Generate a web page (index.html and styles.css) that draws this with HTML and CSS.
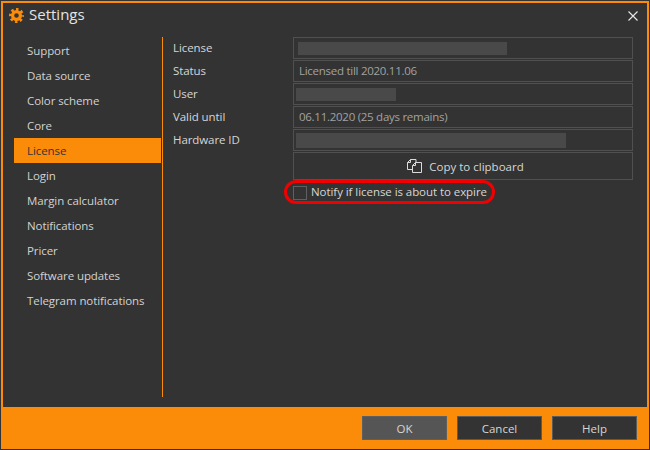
FILE: index.html
```html
<!DOCTYPE html>
<html lang="en">
<head>
<meta charset="utf-8">
<title>Settings</title>
<link rel="stylesheet" href="styles.css">
</head>
<body>
<div class="window">
  <header class="titlebar">
    <svg class="gear" width="15" height="15" viewBox="0 0 15 15" fill="none" stroke="#fb8c0a"><circle cx="7.500" cy="7.500" r="3.900" stroke-width="3.200"/><circle cx="7.500" cy="7.500" r="6" stroke-width="3" stroke-dasharray="2.400 2.312" stroke-dashoffset="1.200"/></svg>
    <span class="title">Settings</span>
    <svg class="close" width="10" height="10" viewBox="0 0 10 10"><path d="M.5.500l9 9M9.500.500l-9 9" stroke="#e8e8e8" stroke-width="1.100" fill="none"/></svg>
  </header>
  <main class="content">
    <nav class="sidebar">
      <div class="nav-item">Support</div>
      <div class="nav-item">Data source</div>
      <div class="nav-item">Color scheme</div>
      <div class="nav-item">Core</div>
      <div class="nav-item active">License</div>
      <div class="nav-item">Login</div>
      <div class="nav-item">Margin calculator</div>
      <div class="nav-item">Notifications</div>
      <div class="nav-item">Pricer</div>
      <div class="nav-item">Software updates</div>
      <div class="nav-item">Telegram notifications</div>
    </nav>
    <section class="panel">
      <div class="form">
        <label class="label">License</label>
        <div class="field"><span class="blur blur-license"></span></div>
        <label class="label">Status</label>
        <div class="field">Licensed till 2020.11.06</div>
        <label class="label">User</label>
        <div class="field field-tight"><span class="blur blur-user"></span></div>
        <label class="label">Valid until</label>
        <div class="field">06.11.2020 (25 days remains)</div>
        <label class="label">Hardware ID</label>
        <div class="field field-tight"><span class="blur blur-hw"></span></div>
        <div class="copy">
          <svg width="15" height="14" viewBox="0 0 15 14" fill="none" stroke="#dcdcdc" stroke-width="1"><path d="M.5 10.500v-7l3-3h5.500v3.500M3.500.5v3h-3M.5 10.500h5"/><path d="M5.500 13.500v-7l3-3h6v10z"/><path d="M8.500 3.500v3h-3"/></svg>
          <span>Copy to clipboard</span>
        </div>
        <div class="notify">
          <span class="checkbox"></span>
          <span class="notify-text">Notify if license is about to expire</span>
          <span class="ring"></span>
        </div>
      </div>
    </section>
  </main>
  <footer class="footer">
    <button class="btn btn-primary">OK</button>
    <button class="btn">Cancel</button>
    <button class="btn">Help</button>
  </footer>
</div>
</body>
</html>
```

FILE: styles.css
```css
* { box-sizing: border-box; }
html, body { margin: 0; padding: 0; }
body { width: 650px; height: 450px; background: #333; overflow: hidden; font-family: "Open Sans", "Noto Sans", sans-serif; font-size: 11.5px; color: #d6d6d6; }
.window { margin: 1px 1px 0 1px; width: 648px; height: 448px; border: 2px solid #fb8c0a; display: flex; flex-direction: column; background: #333; }
.titlebar { height: 27px; flex: none; display: flex; align-items: center; padding: 0 9px 3px 6px; }
.gear { flex: none; }
.title { margin-left: 5px; font-size: 15px; line-height: 20px; margin-bottom: 3px; color: #e4e4e4; flex: 1; }
.close { margin-top: 1px; }
.content { flex: 1; display: flex; padding: 7px 0 10px 11px; }
.sidebar { width: 147px; flex: none; padding-top: 1px; }
.nav-item { height: 25px; line-height: 25px; padding-left: 13px; color: #d2d2d2; letter-spacing: -.08px; white-space: nowrap; }
.nav-item.active { background: #fb8c0a; color: #333; }
.panel { width: 472px; flex: none; margin-left: 1px; border-left: 1px solid #fb8c0a; padding-left: 10px; height: 360px; }
.form { display: grid; grid-template-columns: 120px 340px; grid-auto-rows: 22px; row-gap: 1px; }
.label { line-height: 22px; color: #d6d6d6; letter-spacing: -.08px; }
.field { border: 1px solid #505050; padding: 0 5px; line-height: 20px; color: #a2a2a2; display: flex; align-items: center; letter-spacing: -.27px; white-space: nowrap; }
.field-tight { padding-left: 2px; }
.blur { display: block; background: #494949; height: 13px; }
.blur-license { width: 209px; margin-left: -1px; }
.blur-user { width: 100px; }
.blur-hw { width: 270px; height: 15px; }
.copy { grid-column: 2; height: 28px; border: 1px solid #505050; display: flex; align-items: center; justify-content: center; gap: 7px; color: #d6d6d6; padding-left: 5px; }
.notify { grid-column: 2; position: relative; display: flex; align-items: center; gap: 4px; height: 22px; margin-top: 6px; color: #d6d6d6; white-space: nowrap; letter-spacing: -.06px; }
.checkbox { width: 14px; height: 14px; border: 1px solid #606060; flex: none; margin-top: 1px; }
.notify-text { line-height: 22px; }
.ring { position: absolute; left: -9px; top: -1px; width: 211px; height: 24px; border: 3px solid #f00000; border-radius: 12px; }
.footer { height: 42px; flex: none; background: #fb8c0a; display: flex; justify-content: flex-end; gap: 10px; padding: 9px 10px 0 0; margin-bottom: -1px; }
.btn { width: 85px; height: 24px; background: #333; border: 1px solid #5a5a5a; color: #d6d6d6; font: inherit; padding: 0; }
.btn-primary { background: #555; border-color: #5f5f5f; }
```
